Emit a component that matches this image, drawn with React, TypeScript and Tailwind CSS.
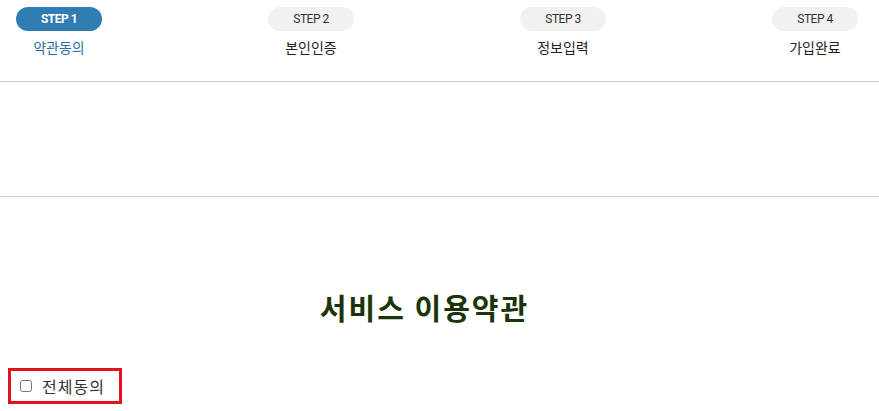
const steps = [
  { no: 1, label: "약관동의" },
  { no: 2, label: "본인인증" },
  { no: 3, label: "정보입력" },
  { no: 4, label: "가입완료" },
];

const kr = "font-['Noto_Sans_CJK_KR',sans-serif]";

export default function App() {
  return (
    <div className={`min-h-[411px] bg-white ${kr}`}>
      {/* step bar */}
      <div className="flex justify-between pl-[16px] pr-[21px] pt-[7px]">
        {steps.map((s) => {
          const active = s.no === 1;
          return (
            <div key={s.no} className="flex w-[86px] flex-col items-center">
              <div
                className={
                  active
                    ? "flex h-[24px] w-full items-center justify-center rounded-full bg-[#2f7db3] font-['Roboto',sans-serif] text-[12px] font-bold tracking-[-0.5px] text-white"
                    : "flex h-[24px] w-full items-center justify-center rounded-full bg-[#f1f1f1] font-['Roboto',sans-serif] text-[12px] tracking-[-0.5px] text-[#333]"
                }
              >
                STEP {s.no}
              </div>
              <div
                className={`mt-[6px] text-[14px] leading-[20px] ${active ? "text-[#2f6f9f]" : "text-[#222]"}`}
              >
                {s.label}
              </div>
            </div>
          );
        })}
      </div>

      <div className="mt-[24px] h-px bg-[#cccccc]" />
      <div className="h-[114px]" />
      <div className="h-px bg-[#cccccc]" />

      {/* title */}
      <h2 className="mt-[90px] pr-[30px] text-center text-[29px] font-bold leading-[40px] tracking-[2px] text-[#1b3409]">
        서비스 이용약관
      </h2>

      {/* agree all */}
      <div className="mt-[41px] pl-[8px]">
        <label className="flex h-[36px] w-[114px] items-center gap-[10px] border-[3px] border-[#e0121b] pl-[9px] text-[16px] tracking-[1px] text-[#333]">
          <input type="checkbox" className="m-0 h-[12px] w-[12px]" />
          <span>전체동의</span>
        </label>
      </div>
    </div>
  );
}
